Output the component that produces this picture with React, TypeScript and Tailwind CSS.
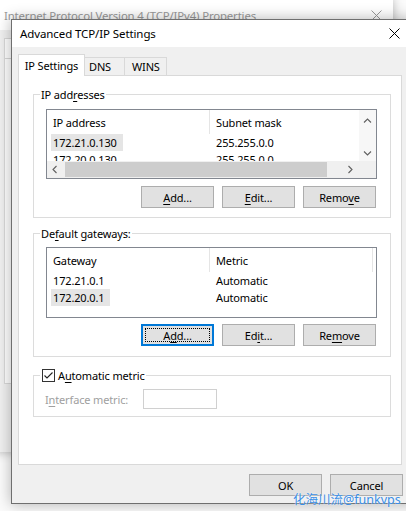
import React from "react";

type Dir = "up" | "down" | "left" | "right";

const CHEV: Record<Dir, string> = {
  up: "M1 5.5 L4.5 2 L8 5.5",
  down: "M1 2.5 L4.5 6 L8 2.5",
  left: "M5.5 1 L2 4.5 L5.5 8",
  right: "M2.5 1 L6 4.5 L2.5 8",
};

function Chev({ dir }: { dir: Dir }) {
  return (
    <svg width="9" height="9" viewBox="0 0 9 9">
      <path d={CHEV[dir]} fill="none" stroke="#606060" strokeWidth="1.1" />
    </svg>
  );
}

function Key({ children }: { children: React.ReactNode }) {
  return <span className="underline decoration-1 underline-offset-[2px]">{children}</span>;
}

function Btn({ children, focused = false }: { children: React.ReactNode; focused?: boolean }) {
  return (
    <div
      className={
        focused
          ? "relative flex h-[22px] w-[73px] items-center justify-center border border-[#0078d7] bg-[#e1e1e1] shadow-[inset_0_0_0_1px_#0078d7]"
          : "relative flex h-[22px] w-[73px] items-center justify-center border border-[#adadad] bg-[#e1e1e1]"
      }
    >
      {focused && <span className="absolute inset-[3px] border border-dotted border-black" />}
      <span>{children}</span>
    </div>
  );
}

function Row({ a, b, selected = false }: { a: string; b: string; selected?: boolean }) {
  return (
    <div className="flex h-[17px] items-center">
      <div className="w-[163px] pl-[4px]">
        <span className={selected ? "bg-[#e5e5e5] py-[1px] pl-[2px] pr-[6px]" : "pl-[2px]"}>{a}</span>
      </div>
      <div className="pl-[6px]">{b}</div>
    </div>
  );
}

export default function App() {
  return (
    <div className="relative h-[511px] w-[406px] overflow-hidden bg-[#fbfbfb] font-['Noto_Sans',sans-serif] text-[11px] leading-[15px] tracking-[-0.15px] text-black">
      {/* window behind */}
      <div className="absolute left-[-6px] top-[-2px] flex h-[454px] w-[399px] flex-col bg-[#f0f0f0] shadow-[0_0_10px_rgba(0,0,0,0.28)]">
        <div className="flex h-[32px] shrink-0 items-center justify-between bg-white pl-[10px] pt-[2px]">
          <span className="text-[11.4px] text-[#9a9a9a]">Internet Protocol Version 4 (TCP/IPv4) Properties</span>
          <div className="flex w-[34px] justify-center">
            <svg width="11" height="11" viewBox="0 0 11 11">
              <path d="M0.5 0.5 L10.5 10.5 M10.5 0.5 L0.5 10.5" stroke="#9a9a9a" strokeWidth="1" />
            </svg>
          </div>
        </div>
        <div className="pl-[10px] pt-[8px]">
          <div className="flex h-[20px] w-[60px] items-center border-x border-t border-[#d9d9d9] bg-white pl-[6px]">General</div>
          <div className="h-[326px] w-[375px] border border-[#d9d9d9] bg-white" />
        </div>
      </div>

      {/* Advanced TCP/IP Settings */}
      <div className="absolute left-[11px] top-[19px] flex h-[485px] w-[407px] flex-col border border-[#6f6f6f] bg-[#f0f0f0] shadow-[0_0_14px_rgba(0,0,0,0.3)]">
        <div className="flex h-[27px] shrink-0 items-center justify-between bg-white pl-[8px]">
          <span className="text-[11.5px] tracking-[-0.1px]">Advanced TCP/IP Settings</span>
          <div className="flex h-full w-[46px] items-center justify-center">
            <svg width="11" height="11" viewBox="0 0 11 11">
              <path d="M0.5 0.5 L10.5 10.5 M10.5 0.5 L0.5 10.5" stroke="#000" strokeWidth="1" />
            </svg>
          </div>
        </div>

        <div className="pl-[6px] pt-[7px]">
          <div className="flex items-end">
            <div className="relative z-10 -mb-px flex h-[22px] w-[67px] items-center justify-center border-x border-t border-[#d9d9d9] bg-white">
              IP Settings
            </div>
            <div className="flex h-[18px] w-[40px] items-center border-r border-t border-[#d9d9d9] pl-[4px]">DNS</div>
            <div className="flex h-[18px] w-[42px] items-center border-r border-t border-[#d9d9d9] pl-[7px]">WINS</div>
          </div>

          <div className="h-[390px] w-[384px] border border-[#d9d9d9] bg-white pl-[14px] pr-[10px] pt-[11px]">
            {/* IP addresses */}
            <fieldset className="border border-[#dcdcdc] px-[6px] pb-[9px]">
              <legend className="px-[1px]">
                IP add<Key>r</Key>esses
              </legend>
              <div className="ml-[6px] mt-[7px] flex h-[70px] w-[331px] flex-col border border-[#828790] bg-white">
                <div className="flex min-h-0 flex-1">
                  <div className="flex-1 overflow-hidden">
                    <div className="flex h-[24px] items-center">
                      <div className="flex h-full w-[163px] items-center border-r border-[#e5e5e5] pl-[6px]">IP address</div>
                      <div className="pl-[6px]">Subnet mask</div>
                    </div>
                    <Row a="172.21.0.130" b="255.255.0.0" selected />
                    <Row a="172.20.0.130" b="255.255.0.0" />
                  </div>
                  <div className="flex w-[17px] flex-col items-center justify-between bg-[#f7f7f7] pb-[3px] pt-[7px]">
                    <Chev dir="up" />
                    <Chev dir="down" />
                  </div>
                </div>
                <div className="flex h-[17px] shrink-0 items-center bg-[#f0f0f0]">
                  <div className="flex w-[17px] justify-center">
                    <Chev dir="left" />
                  </div>
                  <div className="ml-px h-[15px] w-[262px] bg-[#cdcdcd]" />
                  <div className="flex-1" />
                  <div className="flex w-[17px] justify-center">
                    <Chev dir="right" />
                  </div>
                  <div className="w-[17px]" />
                </div>
              </div>
              <div className="mt-[7px] flex justify-end gap-[8px] pr-[8px]">
                <Btn>
                  <Key>A</Key>dd...
                </Btn>
                <Btn>
                  <Key>E</Key>dit...
                </Btn>
                <Btn>
                  Remo<Key>v</Key>e
                </Btn>
              </div>
            </fieldset>

            {/* Default gateways */}
            <fieldset className="mt-[8px] border border-[#dcdcdc] px-[6px] pb-[10px]">
              <legend className="px-[1px]">
                De<Key>f</Key>ault gateways:
              </legend>
              <div className="ml-[6px] mt-[6px] h-[71px] w-[331px] border border-[#828790] bg-white">
                <div className="flex h-[24px] items-center">
                  <div className="flex h-full w-[163px] items-center border-r border-[#e5e5e5] pl-[6px]">Gateway</div>
                  <div className="flex h-full w-[163px] items-center border-r border-[#e5e5e5] pl-[6px]">Metric</div>
                </div>
                <Row a="172.21.0.1" b="Automatic" />
                <Row a="172.20.0.1" b="Automatic" selected />
              </div>
              <div className="mt-[6px] flex justify-end gap-[8px] pr-[8px]">
                <Btn focused>
                  A<Key>d</Key>d...
                </Btn>
                <Btn>
                  Ed<Key>i</Key>t...
                </Btn>
                <Btn>
                  Re<Key>m</Key>ove
                </Btn>
              </div>
            </fieldset>

            {/* metric */}
            <fieldset className="mt-[11px] border border-[#dcdcdc] px-[6px] pb-[7px]">
              <legend className="flex items-center gap-[3px] pl-[2px] pr-[1px]">
                <span className="flex h-[13px] w-[13px] items-center justify-center border border-[#333] bg-white">
                  <svg width="11" height="11" viewBox="0 0 11 11">
                    <path d="M1.5 5.5 L4 8 L9.5 2.5" fill="none" stroke="#222" strokeWidth="1.1" />
                  </svg>
                </span>
                <span>
                  A<Key>u</Key>tomatic metric
                </span>
              </legend>
              <div className="mt-[6px] flex items-center pl-[5px]">
                <span className="w-[98px] text-[#a0a0a0]">
                  I<Key>n</Key>terface metric:
                </span>
                <div className="h-[20px] w-[74px] border border-[#d0d0d0] bg-white" />
              </div>
            </fieldset>
          </div>

          <div className="mt-[9px] flex justify-end gap-[8px] pr-[14px]">
            <Btn>OK</Btn>
            <Btn>Cancel</Btn>
          </div>
        </div>
      </div>

      <div className="absolute left-[293px] top-[491px] font-['Noto_Sans','Noto_Sans_CJK_SC',sans-serif] text-[12.5px] leading-[18px] tracking-normal text-[#3a8ee6] [text-shadow:0_0_2px_#fff]">
        化海川流@funkvps
      </div>
    </div>
  );
}
